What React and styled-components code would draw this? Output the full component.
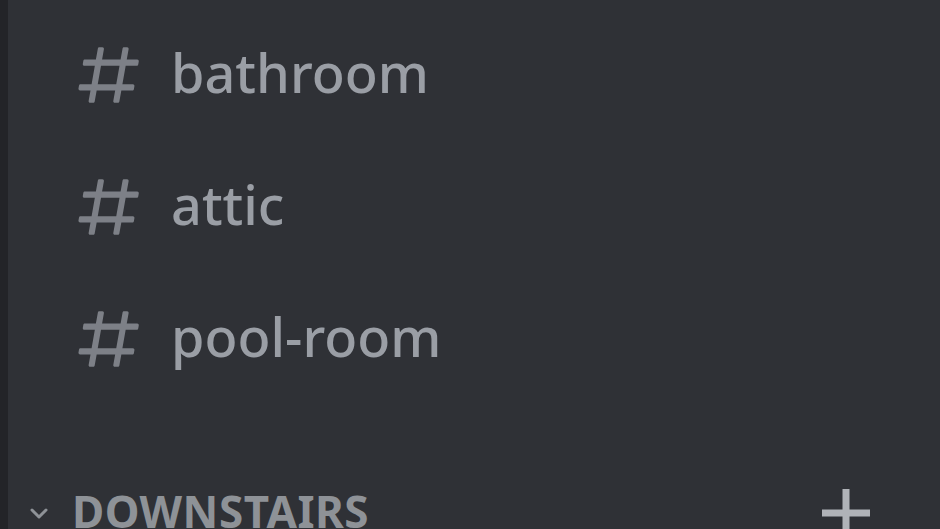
import React from 'react'
import styled, { createGlobalStyle } from 'styled-components'

const Global = createGlobalStyle`
  html, body {
    margin: 0;
    padding: 0;
    background: #2f3136;
    overflow: hidden;
  }
`

const Shell = styled.div`
  display: flex;
  width: 940px;
  height: 529px;
  overflow: hidden;
  background: #2f3136;
  font-family: "Noto Sans", "Open Sans", sans-serif;
`

const Edge = styled.div`
  width: 8px;
  flex-shrink: 0;
  background: #232428;
`

const Sidebar = styled.div`
  flex: 1;
  display: flex;
  flex-direction: column;
  padding-top: 9px;
`

const Channel = styled.div`
  display: flex;
  align-items: center;
  height: 132px;
  padding-left: 64px;
  flex-shrink: 0;
`

const Hash = styled.svg`
  width: 74px;
  height: 74px;
  margin-right: 25px;
  color: #7d8087;
  flex-shrink: 0;
`

const Name = styled.span`
  font-size: 54px;
  font-weight: 500;
  color: #9a9ea5;
  line-height: 1;
  padding-bottom: 6px;
`

const Category = styled.div`
  display: flex;
  align-items: flex-start;
  margin-top: 90px;
  padding-left: 19px;
  padding-right: 70px;
  flex-shrink: 0;
`

const Chevron = styled.svg`
  width: 24px;
  height: 24px;
  margin-top: 6px;
  margin-right: 21px;
  color: #8e9297;
  flex-shrink: 0;
`

const Title = styled.span`
  flex: 1;
  font-size: 44px;
  font-weight: 700;
  letter-spacing: 0.5px;
  color: #8e9297;
  text-transform: uppercase;
  line-height: 1;
  margin-top: -6px;
`

const Plus = styled.svg`
  width: 48px;
  height: 48px;
  margin-top: -6px;
  color: #b0b3b8;
  flex-shrink: 0;
`

const HashIcon = () => (
  <Hash viewBox="0 0 24 24" fill="currentColor">
    <path d="M5.89 21c-.31 0-.55-.28-.5-.59L6 17H2.6c-.31 0-.55-.28-.5-.59l.18-1c.04-.24.25-.41.49-.41h3.58l1.06-6H4c-.31 0-.55-.28-.5-.59l.18-1c.04-.24.25-.41.49-.41h3.580l.64-3.59c.04-.24.25-.41.49-.41h.98c.31 0 .55.28.5.59L9.76 7h6l.64-3.59c.04-.24.25-.41.49-.41h.98c.31 0 .55.28.5.59L17.76 7h3.4c.31 0 .55.28.5.59l-.18 1c-.04.24-.25.41-.49.41h-3.58l-1.06 6h3.4c.31 0 .55.28.5.59l-.18 1c-.04.24-.25.41-.49.41H16l-.64 3.59c-.04.24-.25.41-.49.41h-.98c-.31 0-.55-.28-.5-.59L14 17H8l-.64 3.59c-.04.24-.25.41-.49.41h-.98zM9.41 9l-1.06 6h6l1.06-6h-6z" />
  </Hash>
)

const channels = ['bathroom', 'attic', 'pool-room']

export default function App() {
  return (
    <>
      <Global />
      <Shell>
        <Edge />
        <Sidebar>
          {channels.map((c) => (
            <Channel key={c}>
              <HashIcon />
              <Name>{c}</Name>
            </Channel>
          ))}
          <Category>
            <Chevron viewBox="0 0 24 24" fill="none" stroke="currentColor" strokeWidth="3" strokeLinecap="round" strokeLinejoin="round">
              <polyline points="5 9 12 16 19 9" />
            </Chevron>
            <Title>Downstairs</Title>
            <Plus viewBox="0 0 48 48" fill="currentColor">
              <rect x="20.5" y="0" width="7" height="48" />
              <rect x="0" y="20.5" width="48" height="7" />
            </Plus>
          </Category>
        </Sidebar>
      </Shell>
    </>
  )
}
